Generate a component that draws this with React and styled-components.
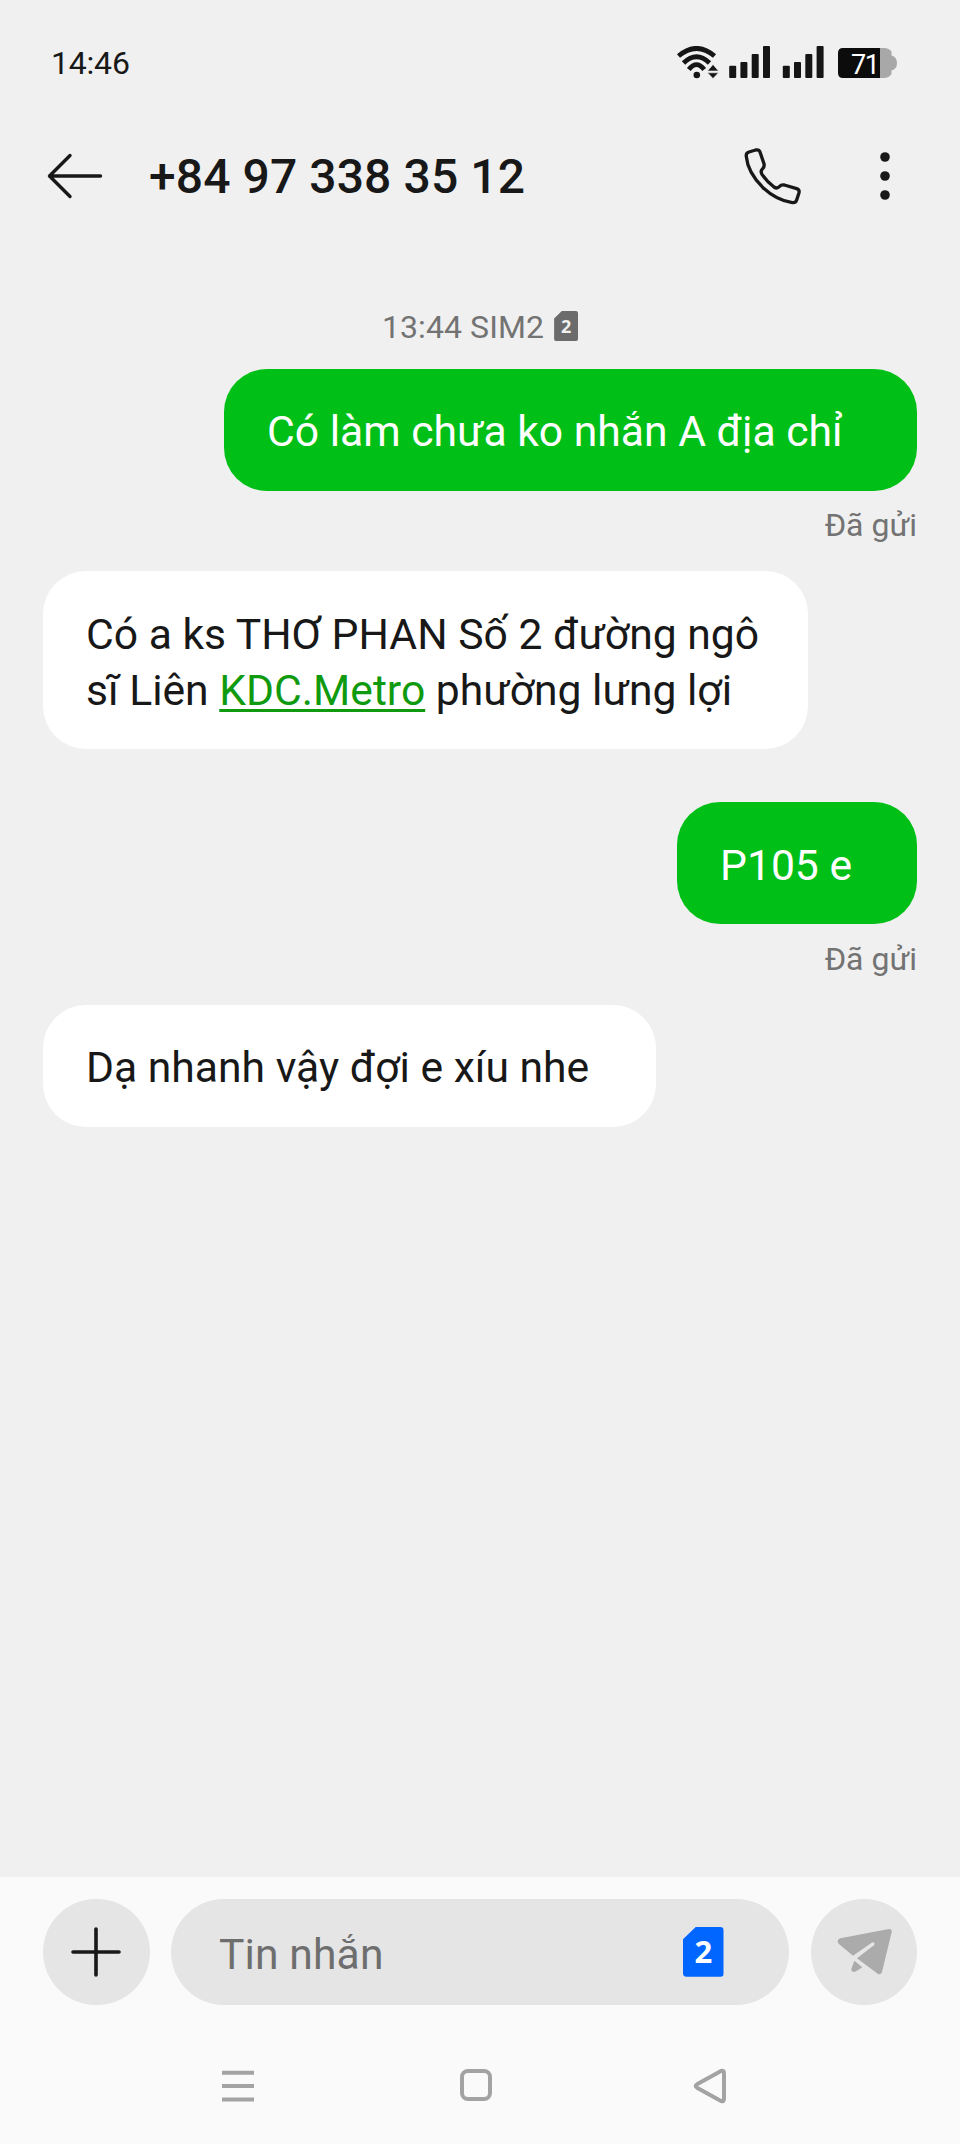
import React from "react";
import styled, { createGlobalStyle } from "styled-components";

const GlobalStyle = createGlobalStyle`
  * {
    box-sizing: border-box;
  }

  body {
    margin: 0;
    background: #f0f0f0;
    font-family: Roboto, "Noto Sans", sans-serif;
  }

  svg {
    display: block;
    flex: none;
  }
`;

const Screen = styled.div`
  display: flex;
  flex-direction: column;
  width: 960px;
  height: 2144px;
  background: #f0f0f0;
  color: #181818;
  overflow: hidden;
`;

const StatusBar = styled.header`
  display: flex;
  align-items: center;
  justify-content: space-between;
  height: 128px;
  padding: 0 63px 0 51px;
`;

const Clock = styled.span`
  padding-bottom: 2px;
  font-size: 32px;
  letter-spacing: -0.2px;
  line-height: 44px;
`;

const AppBar = styled.div`
  display: flex;
  align-items: center;
  height: 96px;
  padding: 0 68.7px 0 47px;
`;

const IconButton = styled.button`
  display: flex;
  padding: 0;
  border: 0;
  background: none;
  color: inherit;
`;

const Title = styled.h1`
  flex: 1;
  margin: 0 0 0 46px;
  padding-top: 1.5px;
  font-size: 48px;
  font-weight: 500;
  letter-spacing: 0.1px;
  line-height: 60px;
  white-space: nowrap;
`;

const Actions = styled.div`
  display: flex;
  align-items: center;
  gap: 76px;
`;

const Thread = styled.main`
  display: flex;
  flex: 1;
  flex-direction: column;
  padding: 81px 43px 0;
`;

const ThreadInfo = styled.div`
  display: flex;
  align-items: center;
  justify-content: center;
  gap: 10px;
  margin-bottom: 19.7px;
  color: #737373;
  font-size: 32px;
  letter-spacing: 0.1px;
  line-height: 44px;
`;

const Message = styled.div`
  display: flex;
  flex-direction: column;
  align-items: ${({ $sent }) => ($sent ? "flex-end" : "flex-start")};
  margin-bottom: ${({ $sent }) => ($sent ? "24.3px" : "53px")};
`;

const Bubble = styled.div`
  width: ${({ $width }) => $width}px;
  padding: 34.6px 0 31.4px 43px;
  border-radius: 43px;
  background: ${({ $sent }) => ($sent ? "#00c017" : "#fff")};
  color: ${({ $sent }) => ($sent ? "#fff" : "#181818")};
  font-size: 42.67px;
  line-height: 56px;
  white-space: nowrap;

  a {
    color: #109a10;
    text-decoration-thickness: 2.5px;
    text-underline-offset: 4px;
    text-decoration-skip-ink: none;
  }
`;

const Line = styled.div`
  height: 56px;
`;

const Delivery = styled.span`
  margin-top: 12.3px;
  color: #737373;
  font-size: 32px;
  line-height: 44px;
`;

const Footer = styled.footer`
  display: flex;
  flex-direction: column;
  height: 267px;
  padding: 21.5px 43px 0;
  background: #fafafa;
`;

const Composer = styled.div`
  display: flex;
  gap: 21.5px;
  height: 106.5px;
`;

const RoundButton = styled(IconButton)`
  align-items: center;
  justify-content: center;
  width: 106.5px;
  padding-left: ${({ $shift }) => $shift || 0}px;
  border-radius: 50%;
  background: #e5e5e5;
`;

const Field = styled.div`
  display: flex;
  flex: 1;
  align-items: center;
  justify-content: space-between;
  padding: 0 65.5px 0 48px;
  border-radius: 54px;
  background: #e5e5e5;
`;

const Placeholder = styled.span`
  padding-top: 4px;
  color: #6e6e6e;
  font-size: 42.67px;
  letter-spacing: 0.1px;
  line-height: 56px;
`;

const SimCard = styled.span`
  display: flex;
  align-items: center;
  justify-content: center;
  width: ${({ $large }) => ($large ? 40.5 : 24)}px;
  height: ${({ $large }) => ($large ? 50 : 30)}px;
  margin-bottom: ${({ $large }) => ($large ? 0 : 2)}px;
  border-radius: ${({ $large }) => ($large ? 4 : 2)}px;
  background: ${({ $large }) => ($large ? "#0066ff" : "#6b6b6b")};
  clip-path: polygon(32% 0, 100% 0, 100% 100%, 0 100%, 0 25%);
  color: ${({ $large }) => ($large ? "#fff" : "#f0f0f0")};
  font-family: "Open Sans", sans-serif;
  font-size: ${({ $large }) => ($large ? 31 : 18)}px;
  font-weight: 700;
  line-height: 1;
`;

const NavBar = styled.nav`
  display: flex;
  align-items: center;
  height: 40px;
  margin-top: 61px;
  padding-left: 177px;
  color: #a3a3a3;

  svg + svg {
    margin-left: 202px;
  }

  svg:last-child {
    margin-left: 198px;
  }
`;

const StatusIconsWrap = styled.div`
  margin-top: -2px;
`;

const Signal = ({ x }) => (
  <g>
    <rect x={x} y="19.7" width="7" height="12.3" rx="1" />
    <rect x={x + 11.2} y="16" width="7" height="16" rx="1" />
    <rect x={x + 22.5} y="8" width="7" height="24" rx="1" />
    <rect x={x + 33.8} y="0" width="7" height="32" rx="1" />
  </g>
);

const StatusIcons = () => (
  <svg width="221" height="34" viewBox="0 0 221 34" fill="#151515">
    <g fill="none" stroke="#151515" strokeWidth="4.8">
      <path d="M2.5 10Q20.5 -5.2 38.5 10" />
      <path d="M7.5 17Q20.5 4.4 33.5 17" />
      <path d="M12.8 23.6Q20.5 13.8 28.200 23.6" />
    </g>
    <circle cx="20.8" cy="29" r="3.3" />
    <path d="M37 18.500L42.500 25H31.500ZM37 32.500L42.500 26.800H31.500Z" stroke="#f0f0f0" strokeWidth=".6" />
    <Signal x={53.2} />
    <Signal x={106.8} />
    <path d="M166 2H208Q213 2 215.500 5.500V9.500Q221 11 221 17Q221 23 215.500 24.500V28Q213 32 208 32H166Z" fill="#a8a8a8" />
    <path d="M167 2H204V32H167Q162 32 162 27V7Q162 2 167 2Z" fill="#0c0c0c" />
    <text x="175" y="28" fill="#fff" fontSize="27" fontFamily="Roboto" textLength="29">71</text>
  </svg>
);

const BackIcon = () => (
  <svg width="56" height="48" viewBox="0 0 56 48" fill="none" stroke="currentColor" strokeWidth="3.4" strokeLinecap="round" strokeLinejoin="round">
    <path d="M53.500 24H3M23 3.500L2.500 24L23 44.500" />
  </svg>
);

const PhoneIcon = () => (
  <svg width="60" height="60" viewBox="130 78 180 180" fill="none" stroke="currentColor" strokeWidth="10" strokeLinejoin="round">
    <path d="M140 110Q138 99 148 96L168 90Q178 88 181 96L193 131Q195 140 189 146Q181 153 187 163Q203 186 223 201Q232 207 239 200Q245 193 254 195L291 206Q300 209 298 218L291 240Q288 249 278 248Q231 241 190 203Q144 157 140 110Z" />
  </svg>
);

const MoreIcon = () => (
  <svg width="12" height="52" viewBox="0 0 12 52" fill="currentColor">
    <circle cx="6" cy="7" r="4.800" />
    <circle cx="6" cy="26" r="4.800" />
    <circle cx="6" cy="45" r="4.800" />
  </svg>
);

const PlusIcon = () => (
  <svg width="50" height="50" viewBox="0 0 50 50" stroke="currentColor" strokeWidth="3.600" strokeLinecap="round">
    <path d="M25 2V48M2 25H48" />
  </svg>
);

const SendIcon = () => (
  <svg width="56" height="48" viewBox="1072 204 168 144" fill="#ababab">
    <path d="M1082 235L1228 207Q1238 206 1236 217L1207 336Q1203 346 1194 341L1132 295L1183 256Q1187 250 1182 247L1176 248L1120 287L1077 251Q1069 240 1082 235Z" />
    <path d="M1124 302L1148 322L1127 335Q1115 338 1115 326Z" />
  </svg>
);

const messages = [
  { sent: true, width: 693, lines: ["Có làm chưa ko nhắn A địa chỉ"] },
  {
    width: 765,
    lines: [
      "Có a ks THƠ PHAN Số 2 đường ngô",
      <>sĩ Liên <a href="#metro">KDC.Metro</a> phường lưng lợi</>,
    ],
  },
  { sent: true, width: 240, lines: ["P105 e"] },
  { width: 613, lines: ["Dạ nhanh vậy đợi e xíu nhe"] },
];

const App = () => {
  return (
    <Screen>
      <GlobalStyle />
      <StatusBar>
        <Clock>14:46</Clock>
        <StatusIconsWrap>
          <StatusIcons />
        </StatusIconsWrap>
      </StatusBar>
      <AppBar>
        <IconButton aria-label="Back"><BackIcon /></IconButton>
        <Title>+84 97 338 35 12</Title>
        <Actions>
          <IconButton aria-label="Call"><PhoneIcon /></IconButton>
          <IconButton aria-label="More"><MoreIcon /></IconButton>
        </Actions>
      </AppBar>
      <Thread>
        <ThreadInfo>
          <span>13:44 SIM2</span>
          <SimCard>2</SimCard>
        </ThreadInfo>
        {messages.map(({ sent, width, lines }) => (
          <Message key={width} $sent={sent}>
            <Bubble $sent={sent} $width={width}>
              {lines.map((line, i) => (
                <Line key={i}>{line}</Line>
              ))}
            </Bubble>
            {sent && <Delivery>Đã gửi</Delivery>}
          </Message>
        ))}
      </Thread>
      <Footer>
        <Composer>
          <RoundButton aria-label="Attach"><PlusIcon /></RoundButton>
          <Field>
            <Placeholder>Tin nhắn</Placeholder>
            <SimCard $large>2</SimCard>
          </Field>
          <RoundButton aria-label="Send" $shift={2}><SendIcon /></RoundButton>
        </Composer>
        <NavBar>
          <svg width="36" height="36" viewBox="0 0 36 36" stroke="currentColor" strokeWidth="4">
            <path d="M2 4.700H34M2 18H34M2 31.400H34" />
          </svg>
          <svg width="36" height="36" viewBox="0 0 36 36" fill="none" stroke="currentColor" strokeWidth="4">
            <rect x="4" y="3" width="28" height="28" rx="6" />
          </svg>
          <svg width="36" height="38" viewBox="0 0 36 38" fill="none" stroke="currentColor" strokeWidth="4" strokeLinejoin="round">
            <path d="M5 17.300L29 4Q32 3 32 6V32Q32 35 29 34L5 20.700Q2.500 19 5 17.300Z" />
          </svg>
        </NavBar>
      </Footer>
    </Screen>
  );
};

export default App;
